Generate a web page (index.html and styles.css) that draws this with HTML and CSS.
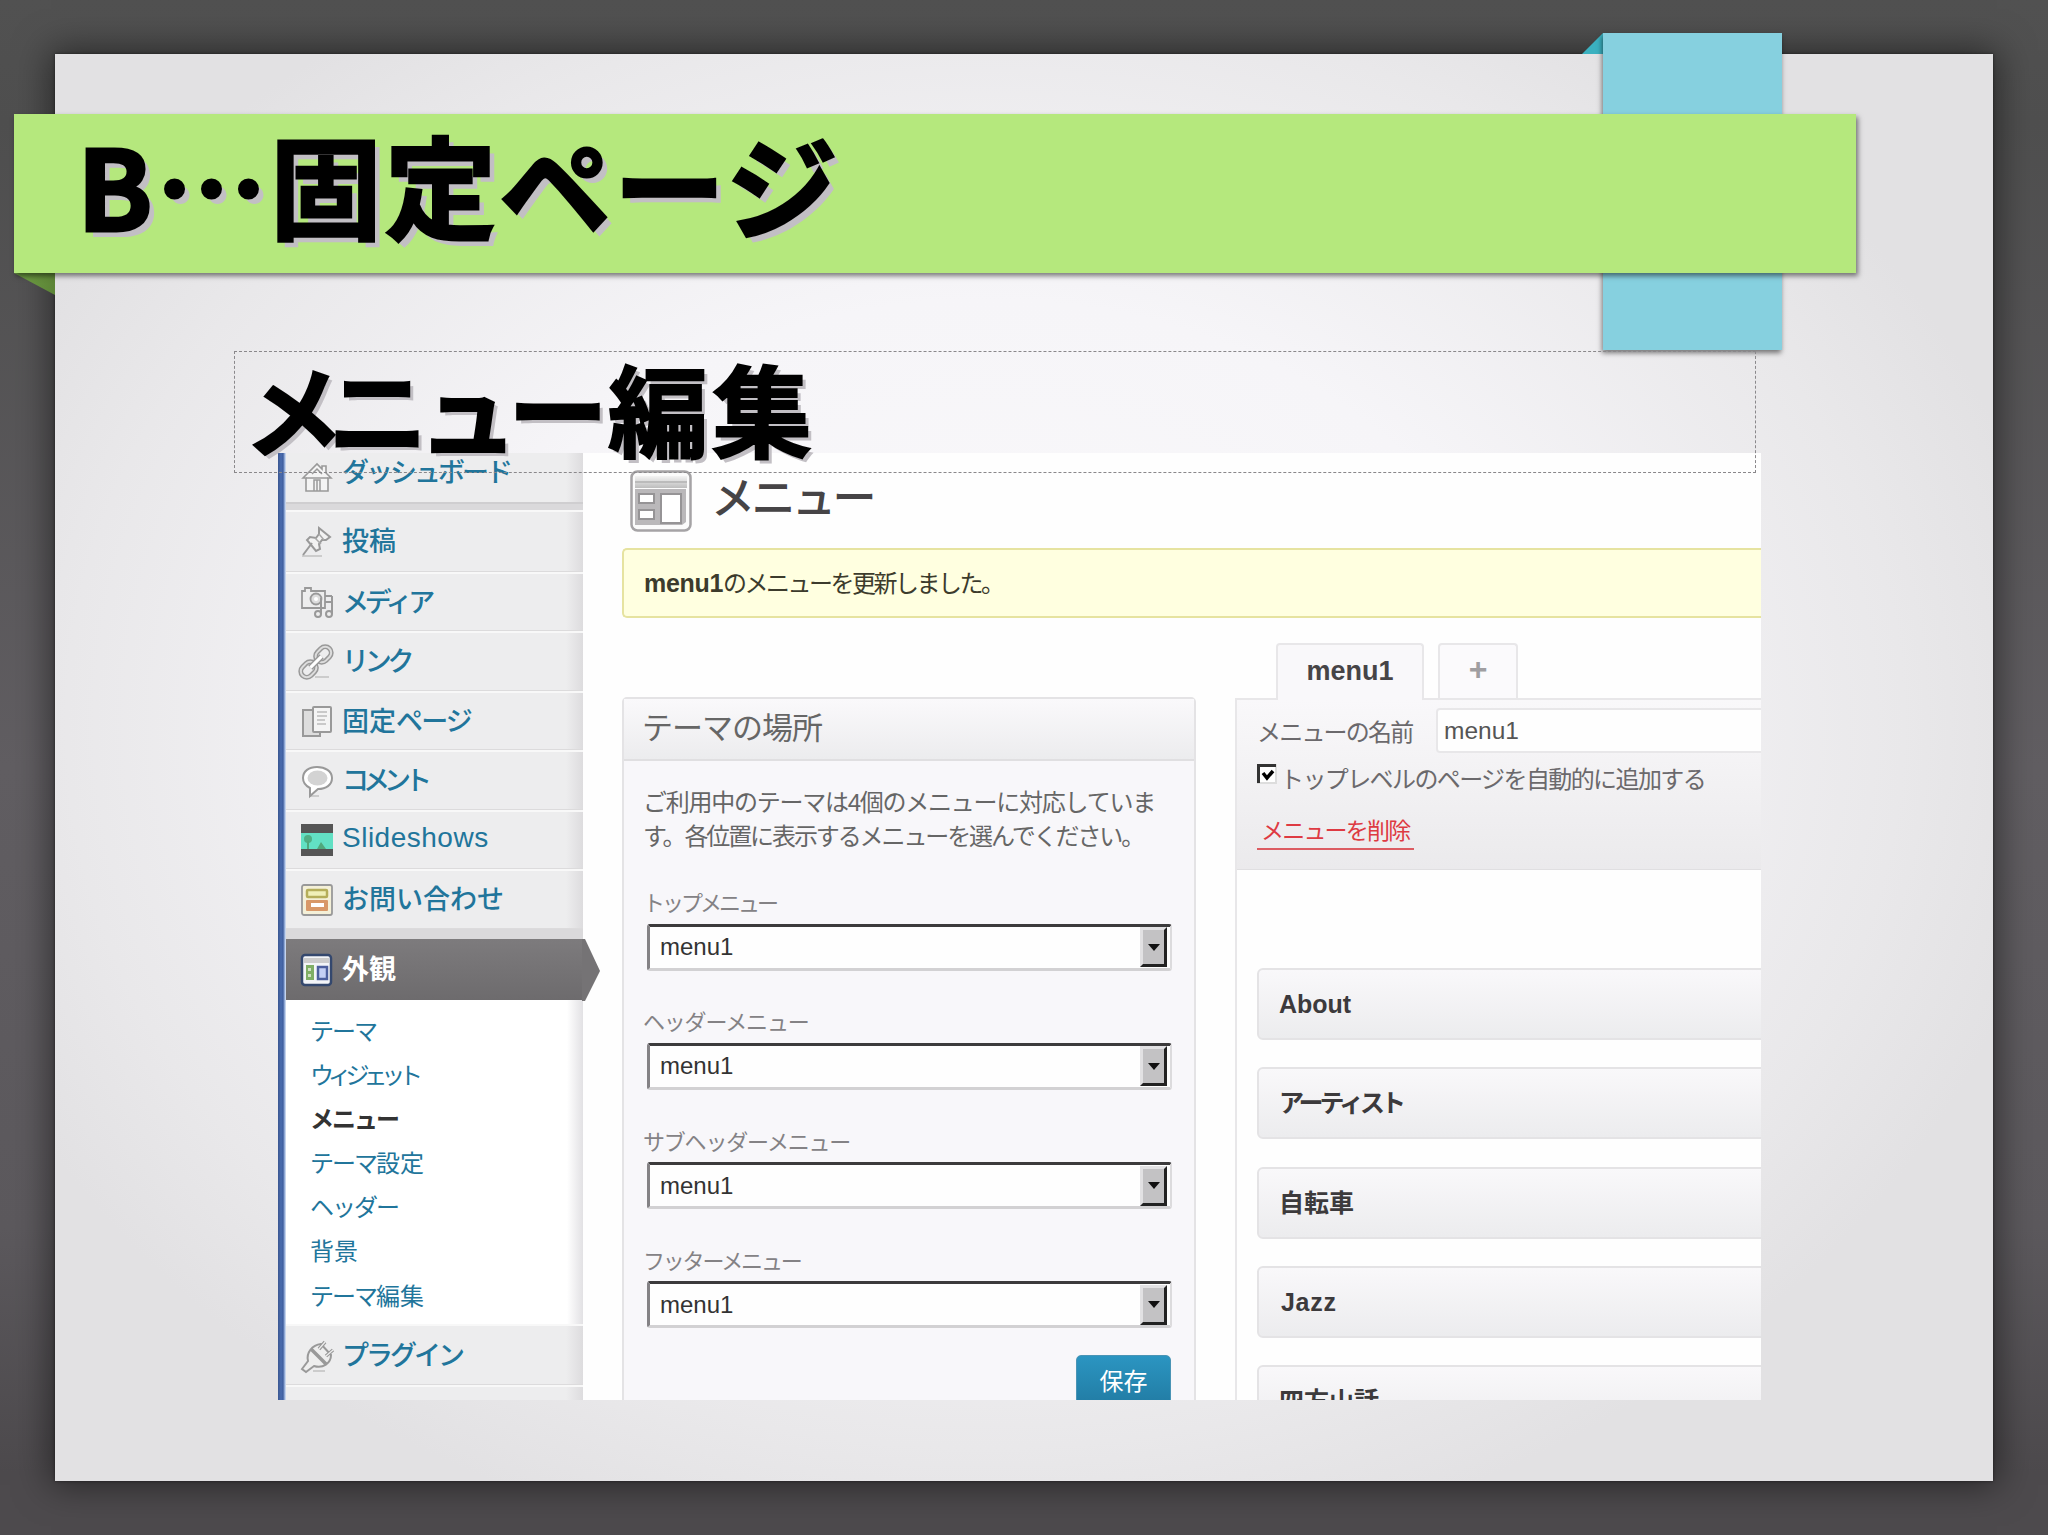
FILE: index.html
```html
<!DOCTYPE html>
<html lang="ja">
<head>
  <meta charset="UTF-8">
  <title>B…固定ページ</title>
  <link rel="stylesheet" href="styles.css">
</head>
<body>
  <div class="slide">
    <div class="paper">
      <div class="admin">
        <nav class="sidebar">
          <a class="item first">
            <svg class="icon" viewBox="0 0 32 32"><path d="M2 17 16 3l5 5V5h4v7l5 5h-3v13H5V17z" fill="#f4f4f4" stroke="#999" stroke-width="1.6"/><path d="M5 17h22M13 30V19h6v11M16 19v11M11 13l5-5 5 5" fill="none" stroke="#999" stroke-width="1.5"/></svg>
            <span class="kana">ダッシュボード</span>
          </a>
          <div class="separator"></div>
          <a class="item tall">
            <svg class="icon" viewBox="0 0 32 32"><path d="M1 30h20" stroke="#ccc" stroke-width="2"/><path d="m2 29 9-12M18 2l11 9-4 3h-4l-3 4 1 5-4 2L6 14l3-3 6 1 3-4z" fill="#f2f2f2" stroke="#999" stroke-width="2"/><path d="m14 12 6 6M18 8l5 6" stroke="#aaa" stroke-width="1.5"/></svg>
            <span>投稿</span>
          </a>
          <a class="item">
            <svg class="icon" viewBox="0 0 32 32"><path d="M1 5h3V2h6v3h14v17H1z" fill="#eee" stroke="#999" stroke-width="1.8"/><circle cx="15" cy="13" r="5.5" fill="#ddd" stroke="#999" stroke-width="1.8"/><circle cx="15" cy="13" r="2" fill="#fff"/><path d="M20 28V12M31 10v18M24 10h7M24 16h7" fill="none" stroke="#999" stroke-width="2"/><circle cx="17" cy="28" r="3" fill="#eee" stroke="#999" stroke-width="2"/><circle cx="28" cy="28" r="3" fill="#eee" stroke="#999" stroke-width="2"/></svg>
            <span class="kana media">メディア</span>
          </a>
          <a class="item">
            <svg class="icon link" viewBox="0 0 34 34"><path d="M16 32h14" stroke="#ccc" stroke-width="2"/><g transform="rotate(-45 17 17)" fill="none"><rect x="-2" y="11" width="17" height="12" rx="6" stroke="#999" stroke-width="5"/><rect x="19" y="11" width="17" height="12" rx="6" stroke="#999" stroke-width="5"/><rect x="-2" y="11" width="17" height="12" rx="6" stroke="#ddd" stroke-width="2"/><rect x="19" y="11" width="17" height="12" rx="6" stroke="#ddd" stroke-width="2"/><path d="M9 17h16" stroke="#999" stroke-width="6"/><path d="M9 17h16" stroke="#fff" stroke-width="3"/></g></svg>
            <span class="kana media">リンク</span>
          </a>
          <a class="item">
            <svg class="icon" viewBox="0 0 32 32"><path d="M2 5h17v26H2z" fill="#ddd" stroke="#999" stroke-width="2"/><rect x="12" y="2" width="18" height="25" rx="1" fill="#f4f4f4" stroke="#999" stroke-width="2"/><path d="M16 7h10M16 11h10M16 15h8M16 19h9" stroke="#bbb" stroke-width="1.5"/></svg>
            <span>固定<span class="kana page">ページ</span></span>
          </a>
          <a class="item">
            <svg class="icon" viewBox="0 0 32 32"><path d="M8 31h10" stroke="#ccc" stroke-width="2"/><path d="M16 2c8 0 15 4 15 11s-6 11-14 11l-8 7V23C5 21 2 18 2 13 2 6 8 2 16 2z" fill="#fff" stroke="#999" stroke-width="2"/><ellipse cx="16.500" cy="13" rx="10" ry="7.500" fill="#d3d3d3"/></svg>
            <span class="comment">コメント</span>
          </a>
          <a class="item">
            <svg class="icon" viewBox="0 0 32 32"><path fill="#555" d="M0 0h32v32H0z"/><path fill="#62e0c4" d="M0 9h32v16H0z"/><circle cx="7" cy="15" r="4" fill="#4fae85"/><path d="M6 17h2v8H6zM16 25l4-7 5 7z" fill="#50a87c"/></svg>
            <span class="latin">Slideshows</span>
          </a>
          <a class="item">
            <svg class="icon" viewBox="0 0 32 32"><rect x="1" y="1" width="30" height="30" rx="2" fill="#f4f0d8" stroke="#999" stroke-width="1.8"/><rect x="6" y="6" width="20" height="7" rx="1" fill="#f0f0b8" stroke="#b5ae5a" stroke-width="2.500"/><rect x="5" y="16" width="22" height="11" rx="1" fill="#d89868"/><path fill="#fff" d="M10 19h13v4H10z"/></svg>
            <span>お問い合わせ</span>
          </a>
          <div class="separator dark"></div>
          <a class="item current">
            <svg class="icon" viewBox="0 0 32 32"><rect x="1" y="1" width="29" height="30" rx="3" fill="#f3f5f8" stroke="#34486e" stroke-width="2.500"/><path d="M3 4h25v5H3z" fill="#ccc"/><path fill="#7fae66" d="M5 11h8v15H5z"/><path fill="#cfe0c4" d="M7 14h3v3H7zM7 20h3v3H7z"/><path d="M17 13h9v12h-9z" fill="#c4d0f5" stroke="#4c5f9e" stroke-width="2.500"/></svg>
            <span>外観</span>
            <svg class="arrow" viewBox="0 0 18 62"><path d="M0 0h3l15 32L3 62H0z" fill="#757375"/></svg>
          </a>
          <div class="submenu">
            <a class="kana">テーマ</a>
            <a class="widget">ウィジェット</a>
            <a class="kana active">メニュー</a>
            <a><span class="kana">テーマ</span>設定</a>
            <a class="kana">ヘッダー</a>
            <a>背景</a>
            <a><span class="kana">テーマ</span>編集</a>
          </div>
          <a class="item plugin">
            <svg class="icon" viewBox="0 0 32 32"><path d="M12 31h12" stroke="#ccc" stroke-width="2"/><path d="m1 29 6-8C5 13 11 5 20 4l10 11c0 8-8 14-17 11l-8 6z" fill="#eee" stroke="#999" stroke-width="2"/><path d="m10 9 15 15M18 9l6-7M25 16l7-6" stroke="#999" stroke-width="3.500"/><path d="m18 9 6-7M25 16l7-6" stroke="#eee" stroke-width="1.200"/></svg>
            <span class="kana">プラグイン</span>
          </a>
          <div class="item rest"></div>
        </nav>

        <main class="content">
          <header class="heading">
            <svg class="heading-icon" viewBox="0 0 62 62"><defs><linearGradient id="bar" x2="0" y2="1"><stop offset="0" stop-color="#f4f4f4"/><stop offset="1" stop-color="#bdbdbd"/></linearGradient></defs><rect x="1.500" y="1.500" width="59" height="59" rx="6" fill="#fbfbfb" stroke="#a5a3a5" stroke-width="2.500"/><path fill="url(#bar)" d="M5 6h52v12H5z"/><path d="M5 12h52" stroke="#bbb" stroke-width="2"/><path fill="#bab8ba" d="M5 19h51v33l-4 3H5z"/><path fill="#fff" stroke="#969496" stroke-width="2" d="M9 24h15v9H9zM9 40h15v9H9zM31 24h20v29H31z"/></svg>
            <h2>メニュー</h2>
          </header>
          <div class="notice"><p><b>menu1</b>のメニューを更新しました。</p></div>

          <div class="columns">
            <section class="locations">
              <h3>テーマの場所</h3>
              <div class="locations-body">
                <p class="line one">ご利用中のテーマは4個のメニューに対応していま</p>
                <p class="line two">す。各位置に表示するメニューを選んでください。</p>
                <div class="field">
                  <label class="narrow">トップメニュー</label>
                  <div class="select"><span>menu1</span><i></i></div>
                </div>
                <div class="field">
                  <label class="wide">ヘッダーメニュー</label>
                  <div class="select"><span>menu1</span><i></i></div>
                </div>
                <div class="field">
                  <label class="wide">サブヘッダーメニュー</label>
                  <div class="select"><span>menu1</span><i></i></div>
                </div>
                <div class="field">
                  <label>フッターメニュー</label>
                  <div class="select"><span>menu1</span><i></i></div>
                </div>
                <button class="save">保存</button>
              </div>
            </section>

            <section class="editor">
              <div class="tabs">
                <div class="tab selected">menu1</div>
                <div class="tab add">+</div>
              </div>
              <div class="panel">
                <div class="panel-head">
                  <div class="name-row">
                    <label>メニューの名前</label>
                    <div class="name-input">menu1</div>
                  </div>
                  <div class="check-row">
                    <svg class="check" viewBox="0 0 20 20"><path d="M0 0h20v20H0z" fill="#ddd"/><path d="M2 2h16v16H2z" fill="#fff"/><path d="M1.500 19V1.500H19" fill="none" stroke="#333" stroke-width="3"/><path d="m6 9 4 5 6-7" fill="none" stroke="#000" stroke-width="3.500"/></svg>
                    <span>トップレベルのページを自動的に追加する</span>
                  </div>
                  <a class="delete">メニューを削除</a>
                </div>
                <div class="menu-items">
                  <div class="menu-item">About</div>
                  <div class="menu-item artist">アーティスト</div>
                  <div class="menu-item">自転車</div>
                  <div class="menu-item jazz">Jazz</div>
                  <div class="menu-item">四方山話</div>
                </div>
              </div>
            </section>
          </div>
        </main>
      </div>
    </div>

    <!-- tape and ribbon lie over the paper -->
    <svg class="tape-fold" viewBox="0 0 21 21"><path d="M21 0v21H0z" fill="#3bb1c0"/></svg>
    <div class="tape"></div>
    <svg class="ribbon-fold" viewBox="0 0 41 22"><defs><linearGradient id="fold"><stop offset="0" stop-color="#6f9f45"/><stop offset="1" stop-color="#5c8436"/></linearGradient></defs><path d="M0 0h41v22z" fill="url(#fold)"/></svg>
    <div class="ribbon"><h1>B…固定ページ</h1></div>
    <div class="subtitle"><span class="k1">メ</span><span class="k2">ニュ</span><span class="k3">ー</span>編集</div>
  </div>
</body>
</html>
```
FILE: styles.css
```css
* {
  margin: 0;
  padding: 0;
  box-sizing: border-box;
}

body {
  font-family: "Liberation Sans", "Noto Sans CJK JP", sans-serif;
  width: 2048px;
  height: 1535px;
  overflow: hidden;
}

.slide {
  position: relative;
  width: 2048px;
  height: 1535px;
  padding: 54px 55px 54px 55px;
  background: linear-gradient(#515151, #4f4f4f 8%, #615e62 50%, #5c595d 80%, #4d4a4d 96%);
  overflow: hidden;
}

.paper {
  height: 1427px;
  padding: 399px 0 0 223px;
  background: radial-gradient(ellipse 1080px 850px at 48% 47%, #faf9fb 0%, #f6f5f8 50%, #e9e8ea 85%, #e2e1e3 100%);
  box-shadow: 0 0 34px 4px rgba(0, 0, 0, 0.5), 0 0 3px rgba(0, 0, 0, 0.5);
}

/* Admin screen */
.admin {
  display: flex;
  width: 1483px;
  height: 947px;
  background: #fefefe;
  overflow: hidden;
}

.sidebar {
  flex: none;
  width: 305px;
  padding-left: 8px;
  background: linear-gradient(90deg, #3a5690 0, #4a6cae 3px, #3f5e9e 5px, #a9c0e6 7px, #dfe6f2 8px);
  font-size: 27px;
  color: #21759b;
}

.item {
  display: flex;
  align-items: center;
  width: 297px;
  height: 59.500px;
  padding-left: 14px;
  border-top: 2px solid #f8f8f8;
  border-bottom: 1px solid #dcdbdc;
  background: linear-gradient(90deg, #ededee 280px, #dddcde 297px);
  font-weight: 500;
  white-space: nowrap;
}

.item > span {
  margin-bottom: 3px;
}

.icon {
  flex: none;
  width: 32px;
  height: 32px;
  margin: 1px 9px 0 1px;
  overflow: visible;
}

.icon.link {
  width: 34px;
  height: 34px;
  margin: 2px 9px 0 -1px;
}

.kana {
  letter-spacing: -3px;
}

.media {
  letter-spacing: -4.300px;
}

.page {
  letter-spacing: -1.800px;
}

.comment {
  letter-spacing: -6px;
}

.latin {
  font-size: 28px;
  letter-spacing: 0.500px;
}

.first {
  height: 49px;
  padding-bottom: 11px;
  border: none;
}

.first .icon {
  margin-top: 10px;
}

.separator {
  width: 297px;
  height: 8px;
  background: #dad9db;
  border-top: 2px solid #cfced0;
}

.separator.dark {
  height: 10px;
  border-top: none;
}

.tall {
  height: 61.500px;
}

.current {
  position: relative;
  height: 61px;
  border: none;
  color: #fff;
  background: linear-gradient(#7d7b7d, #6d6b6d);
  font-weight: 700;
}

.arrow {
  position: absolute;
  left: 296px;
  top: 0;
  width: 18px;
  height: 62px;
}

.submenu {
  width: 297px;
  height: 324.500px;
  padding: 10px 0 0 24px;
  background: linear-gradient(90deg, #fff 281px, #e2e1e4 297px);
  font-size: 24px;
}

.submenu a {
  display: block;
  height: 44.200px;
  line-height: 44px;
}

.submenu .kana {
  letter-spacing: -2px;
}

.submenu .widget {
  letter-spacing: -6.200px;
}

.submenu .active {
  color: #333;
  font-weight: 700;
}

.plugin {
  height: 61px;
}

/* Content */
.content {
  flex: none;
  width: 1178px;
  padding: 16px 0 0 39px;
}

.heading {
  display: flex;
  align-items: center;
  height: 63px;
}

.heading-icon {
  width: 62px;
  height: 62px;
  margin: 0 19px 0 8px;
}

.heading h2 {
  font-size: 44px;
  font-weight: 500;
  letter-spacing: -3.500px;
  line-height: 50px;
  margin-bottom: 4px;
  color: #464446;
}

.notice {
  height: 70px;
  margin-top: 16px;
  padding-left: 20px;
  border: 2px solid #e6e3a0;
  border-right: none;
  border-radius: 5px 0 0 5px;
  background: #ffffe0;
}

.notice p {
  font-size: 24px;
  letter-spacing: -2.500px;
  line-height: 66px;
  color: #3c3b2c;
}

.notice b {
  font-size: 25px;
  letter-spacing: -0.300px;
}

.columns {
  display: flex;
  align-items: flex-start;
}

.locations {
  width: 574px;
  height: 720px;
  margin-top: 79px;
  border: 2px solid #e4e3e5;
  border-radius: 5px 5px 0 0;
  background: #f8f7fa;
  color: #666;
}

.locations h3 {
  height: 62px;
  padding-left: 18px;
  border-bottom: 2px solid #e0dfe1;
  background: linear-gradient(#faf9fb, #ececee);
  font-size: 31px;
  font-weight: 400;
  letter-spacing: -1px;
  line-height: 60px;
}

.locations-body {
  padding: 25px 23px 0 19px;
  font-size: 24px;
}

.line {
  height: 34px;
  line-height: 34px;
  white-space: nowrap;
}

.line.one {
  letter-spacing: -1.250px;
}

.line.two {
  letter-spacing: -2.100px;
}

.field {
  height: 119.300px;
  padding-top: 31px;
}

.field label {
  display: block;
  height: 38.500px;
  font-size: 22px;
  letter-spacing: -2.200px;
  line-height: 38px;
  color: #848285;
}

.field .narrow {
  letter-spacing: -3px;
}

.field .wide {
  letter-spacing: -1.200px;
}

.select {
  display: flex;
  justify-content: space-between;
  align-items: center;
  width: 525px;
  height: 47px;
  margin-left: 4px;
  padding: 0 3px 0 10px;
  border-style: solid;
  border-width: 3px 2px 3px 3px;
  border-color: #3c3b3c #dcdbdd #d2d1d3 #848285;
  border-radius: 3px;
  background: #fefefe;
  color: #333;
  font-size: 24px;
}

.select i {
  display: flex;
  justify-content: center;
  align-items: center;
  width: 27px;
  height: 40px;
  border: 3px solid;
  border-color: #e2e1e3 #222 #222 #e2e1e3;
  background: #c3c2c4;
}

.select i::after {
  content: "";
  border: 6px solid transparent;
  border-top: 7px solid #111;
  border-bottom: none;
}

.save {
  display: block;
  width: 95px;
  height: 54px;
  margin: 24px 0 0 auto;
  border: 1px solid #4a94b5;
  border-radius: 5px;
  background: linear-gradient(#2b95c1, #217aa2);
  color: #fff;
  font-family: inherit;
  font-size: 24px;
  line-height: 50px;
}

.editor {
  flex: none;
  width: 560px;
  margin: 25px 0 0 39px;
}

.tabs {
  display: flex;
  gap: 14px;
  height: 55px;
  padding-left: 41px;
}

.tab {
  width: 80px;
  height: 55px;
  border: 2px solid #e8e7e9;
  border-bottom: none;
  border-radius: 4px 4px 0 0;
  background: #fbfafc;
  color: #a09ea1;
  font-size: 32px;
  font-weight: 700;
  line-height: 48px;
  text-align: center;
}

.tab.selected {
  position: relative;
  width: 148px;
  height: 57px;
  background: #f9f8fa;
  color: #464446;
  font-size: 27px;
  line-height: 53px;
}

.panel {
  height: 800px;
  border-left: 2px solid #e8e7e9;
}

.panel-head {
  height: 172px;
  padding: 8px 0 0 20px;
  border-top: 2px solid #e8e7e9;
  background: linear-gradient(#f9f8fa, #ebeaec);
  border-bottom: 1px solid #e0dfe1;
  font-size: 24px;
  color: #6b696c;
}

.name-row {
  display: flex;
  align-items: center;
  height: 45px;
}

.name-row label {
  flex: none;
  width: 179px;
  letter-spacing: -1.800px;
}

.name-input {
  width: 400px;
  height: 45px;
  padding-left: 6px;
  border: 2px solid #e8e7e9;
  border-radius: 4px;
  background: #fefefe;
  color: #555;
  font-size: 24.500px;
  line-height: 42px;
}

.check-row {
  display: flex;
  align-items: center;
  height: 52px;
  letter-spacing: -1.600px;
  white-space: nowrap;
}

.check {
  width: 20px;
  height: 20px;
  margin: -11px 3px 0 0;
}

.check-row span {
  margin-bottom: 3px;
}

.delete {
  display: inline-block;
  height: 35px;
  margin-top: 10px;
  padding: 0 5px 0 4px;
  border-bottom: 2px solid #dc5c62;
  color: #de3a42;
  font-size: 23px;
  letter-spacing: -1.800px;
  line-height: 32px;
}

.menu-items {
  display: flex;
  flex-direction: column;
  gap: 27.300px;
  padding: 98px 0 0 20px;
}

.menu-item {
  flex: none;
  height: 72px;
  padding-left: 20px;
  border: 2px solid #e4e3e5;
  border-radius: 6px;
  background: linear-gradient(#f9f8fa, #ececee);
  color: #3c3a3c;
  font-size: 25px;
  font-weight: 700;
  line-height: 69px;
}

.artist {
  letter-spacing: -4px;
}

.jazz {
  padding-left: 22px;
  letter-spacing: 0.700px;
}

/* Decorations */
.tape {
  position: absolute;
  left: 1603px;
  top: 33px;
  width: 179px;
  height: 317px;
  background: #86d0df;
  box-shadow: -1px 3px 5px rgba(0, 0, 0, 0.5);
}

.tape-fold {
  position: absolute;
  left: 1582px;
  top: 33px;
  width: 21px;
  height: 21px;
}

.ribbon {
  position: absolute;
  left: 14px;
  top: 114px;
  width: 1842px;
  height: 159px;
  padding-left: 63px;
  background: #b5e87d;
  box-shadow: 2px 3px 5px rgba(0, 0, 0, 0.5);
}

.ribbon-fold {
  position: absolute;
  left: 14px;
  top: 273px;
  width: 41px;
  height: 22px;
}

h1,
.subtitle {
  font-family: "Noto Sans CJK JP", sans-serif;
  font-weight: 700;
  color: #000;
  white-space: nowrap;
}

h1 {
  font-size: 111px;
  letter-spacing: 3.500px;
  line-height: 138px;
  text-shadow: 6px 6px #c2bfc4;
  -webkit-text-stroke: 3px #000;
}

.subtitle {
  position: absolute;
  left: 234px;
  top: 351px;
  width: 1522px;
  height: 122px;
  padding-left: 9px;
  border: 1px dashed #8a888b;
  font-size: 100px;
  line-height: 109px;
  letter-spacing: 4px;
  text-shadow: 4px 4px #c2bfc4;
  -webkit-text-stroke: 2px #000;
}

.k1 {
  letter-spacing: -16px;
}

.k2 {
  letter-spacing: -10px;
}

.k3 {
  letter-spacing: 0;
}
```
